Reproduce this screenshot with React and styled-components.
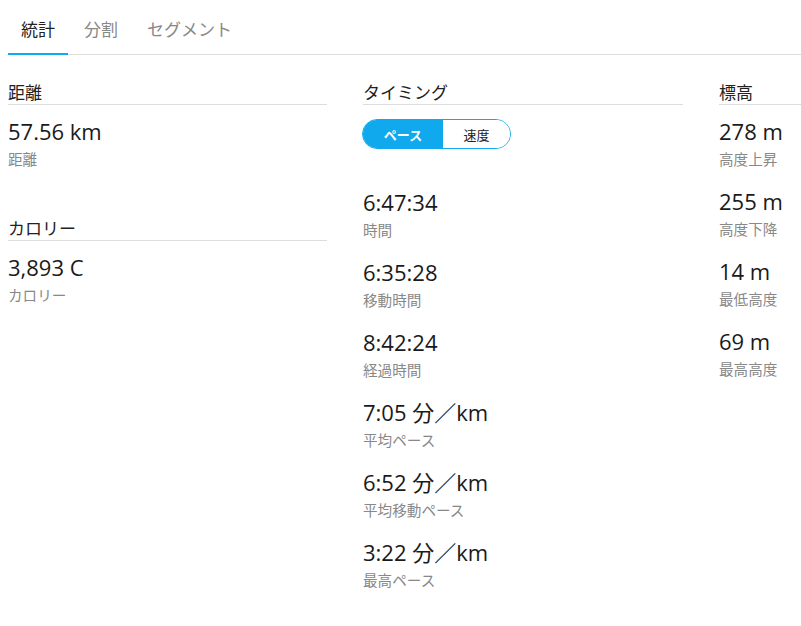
import React, { useState } from "react";
import styled, { createGlobalStyle } from "styled-components";

const GlobalStyle = createGlobalStyle`
  html {
    overflow-x: hidden;
  }
  body {
    margin: 8px 0 8px 8px;
    background: #fff;
    font-family: "Open Sans", "Noto Sans CJK JP", sans-serif;
    color: #222;
  }
`;

const BLUE = "#11a9ed";

const Page = styled.div`
  overflow: hidden;
`;

const TabBar = styled.div`
  display: flex;
  border-bottom: 1px solid #ddd;
`;

const Tab = styled.div`
  padding: 12px 13px 13px;
  font-size: 17px;
  line-height: 20px;
  color: ${(p) => (p.active ? "#222" : "#888")};
  border-bottom: 2px solid ${(p) => (p.active ? BLUE : "transparent")};
  margin-bottom: -1px;
  margin-right: 3px;
`;

const Columns = styled.div`
  display: grid;
  grid-template-columns: 319px 320px 320px;
  column-gap: 36px;
  margin-top: 28px;
  align-items: start;
`;

const Column = styled.div`
  display: flex;
  flex-direction: column;
`;

const Section = styled.div`
  margin-bottom: 33px;
`;

const SectionTitle = styled.div`
  font-size: 17px;
  line-height: 20px;
  padding-bottom: 1px;
  border-bottom: 1px solid #ddd;
  margin-bottom: 11px;
`;

const Stat = styled.div`
  margin-bottom: 17px;
`;

const Value = styled.div`
  font-size: 22px;
  line-height: 30px;
  color: #1a1a1a;
`;

const Label = styled.div`
  margin-top: 3px;
  font-size: 14.6px;
  line-height: 20px;
  color: #888;
`;

const Toggle = styled.div`
  display: flex;
  width: 149px;
  height: 30px;
  box-sizing: border-box;
  border: 1px solid ${BLUE};
  border-radius: 15px;
  overflow: hidden;
  margin: 14px 0 38px -1px;
`;

const ToggleOption = styled.div`
  flex: ${(p) => (p.active ? "0 0 80px" : "1")};
  display: flex;
  align-items: center;
  justify-content: center;
  font-size: 13px;
  font-weight: ${(p) => (p.active ? 700 : 400)};
  background: ${(p) => (p.active ? BLUE : "#fff")};
  color: ${(p) => (p.active ? "#fff" : "#222")};
  cursor: pointer;
`;

const StatItem = ({ value, label }) => (
  <Stat>
    <Value>{value}</Value>
    <Label>{label}</Label>
  </Stat>
);

export default function App() {
  const [mode, setMode] = useState("pace");
  return (
    <Page>
      <GlobalStyle />
      <TabBar>
        <Tab active>統計</Tab>
        <Tab>分割</Tab>
        <Tab>セグメント</Tab>
      </TabBar>
      <Columns>
        <Column>
          <Section>
            <SectionTitle>距離</SectionTitle>
            <StatItem value="57.56 km" label="距離" />
          </Section>
          <Section>
            <SectionTitle>カロリー</SectionTitle>
            <StatItem value="3,893 C" label="カロリー" />
          </Section>
        </Column>
        <Column>
          <Section>
            <SectionTitle>タイミング</SectionTitle>
            <Toggle>
              <ToggleOption active={mode === "pace"} onClick={() => setMode("pace")}>
                ペース
              </ToggleOption>
              <ToggleOption active={mode === "speed"} onClick={() => setMode("speed")}>
                速度
              </ToggleOption>
            </Toggle>
            <StatItem value="6:47:34" label="時間" />
            <StatItem value="6:35:28" label="移動時間" />
            <StatItem value="8:42:24" label="経過時間" />
            <StatItem value="7:05 分／km" label="平均ペース" />
            <StatItem value="6:52 分／km" label="平均移動ペース" />
            <StatItem value="3:22 分／km" label="最高ペース" />
          </Section>
        </Column>
        <Column>
          <Section>
            <SectionTitle>標高</SectionTitle>
            <StatItem value="278 m" label="高度上昇" />
            <StatItem value="255 m" label="高度下降" />
            <StatItem value="14 m" label="最低高度" />
            <StatItem value="69 m" label="最高高度" />
          </Section>
        </Column>
      </Columns>
    </Page>
  );
}
